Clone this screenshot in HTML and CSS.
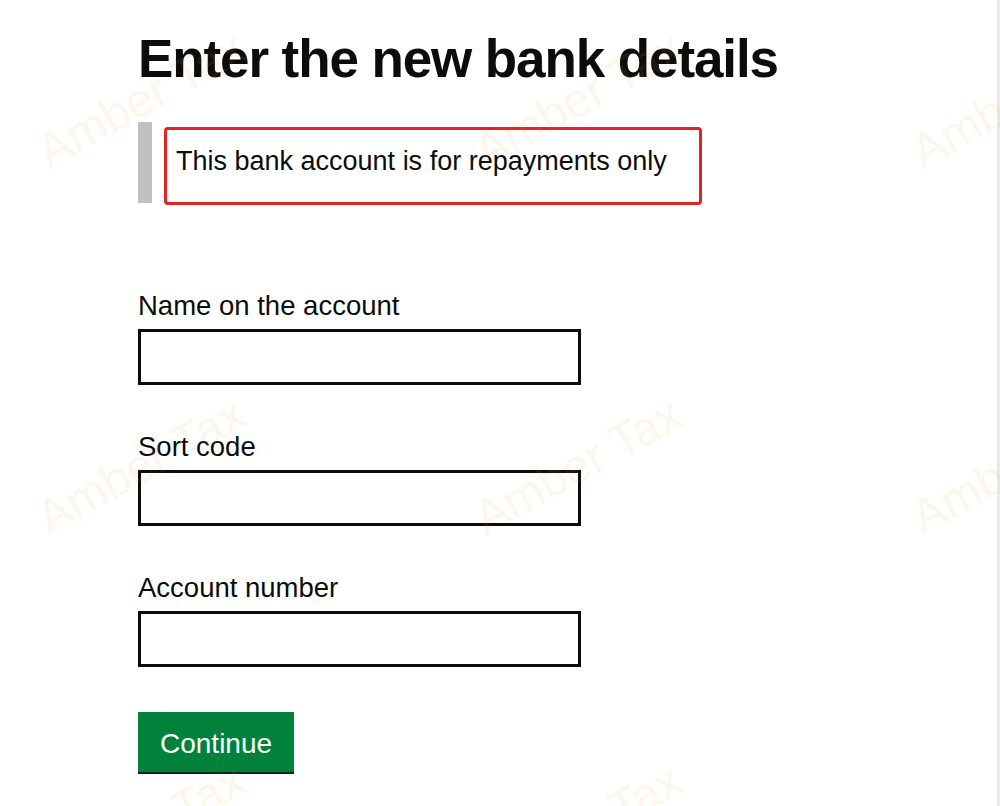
FILE: index.html
```html
<!DOCTYPE html>
<html lang="en">
<head>
    <meta charset="UTF-8">
    <meta name="viewport" content="width=device-width, initial-scale=1.0">
    <title>Enter the new bank details</title>
    <link rel="stylesheet" href="styles.css">
</head>
<body>

    <main class="page">
        <h1 class="heading">Enter the new bank details</h1>

        <div class="inset">
            <div class="highlight">This bank account is for repayments only</div>
        </div>

        <form id="bankForm">
            <div class="form-group">
                <label for="accountName">Name on the account</label>
                <input type="text" id="accountName" name="accountName">
            </div>

            <div class="form-group">
                <label for="sortCode">Sort code</label>
                <input type="text" id="sortCode" name="sortCode">
            </div>

            <div class="form-group">
                <label for="accountNumber">Account number</label>
                <input type="text" id="accountNumber" name="accountNumber">
            </div>

            <button type="submit">Continue</button>
        </form>
    </main>

    <div class="scroll-edge"></div>

    <div class="watermark">
        <span>Amber Tax</span><span>Amber Tax</span><span>Amber Tax</span>
        <span>Amber Tax</span><span>Amber Tax</span><span>Amber Tax</span>
        <span>Amber Tax</span><span>Amber Tax</span><span>Amber Tax</span>
    </div>

</body>
</html>
```

FILE: styles.css
```css
body {
    margin: 0;
    font-family: "Liberation Sans", Arial, sans-serif;
    color: #0b0c0c;
    background-color: white;
    display: flex;
    height: 100vh;
    overflow: hidden;
}

.page {
    flex: 1;
    padding: 29px 0 0 138px;
}

.scroll-edge {
    width: 3px;
    background-color: #e9e9e9;
}

.heading {
    margin: 0;
    font-size: 53px;
    line-height: 60px;
    font-weight: bold;
    letter-spacing: -1.1px;
}

.inset {
    margin: 33px 0 86px;
    padding: 5px 0 0 12px;
    border-left: 14px solid #bfc1c3;
    height: 81px;
    box-sizing: border-box;
}

.highlight {
    width: 538px;
    height: 78px;
    box-sizing: border-box;
    padding: 14px 9px;
    border: 3px solid #e02424;
    border-radius: 4px;
    font-size: 27px;
    line-height: 34px;
}

.form-group {
    margin-bottom: 45px;
}

label {
    display: block;
    font-size: 27.5px;
    line-height: 34px;
    margin-bottom: 6px;
}

input {
    display: block;
    width: 443px;
    height: 56px;
    box-sizing: border-box;
    border: 3px solid #0b0c0c;
    border-radius: 0;
    padding: 5px 8px;
    font-size: 27px;
    font-family: inherit;
}

button {
    font-family: "Liberation Sans", Arial, sans-serif;
    font-size: 28px;
    line-height: 54px;
    padding: 5px 22px 1px;
    color: white;
    background-color: #00823b;
    border: none;
    border-radius: 0;
    box-shadow: 0 2px 0 #002d18;
    cursor: pointer;
}

.watermark {
    position: fixed;
    top: -84px;
    left: -78px;
    display: grid;
    grid-template-columns: repeat(3, 437px);
    grid-auto-rows: 366px;
    pointer-events: none;
}

.watermark span {
    display: flex;
    align-items: center;
    justify-content: center;
    font-size: 48px;
    color: rgba(240, 150, 40, 0.09);
    transform: rotate(-29deg);
    white-space: nowrap;
}
```
